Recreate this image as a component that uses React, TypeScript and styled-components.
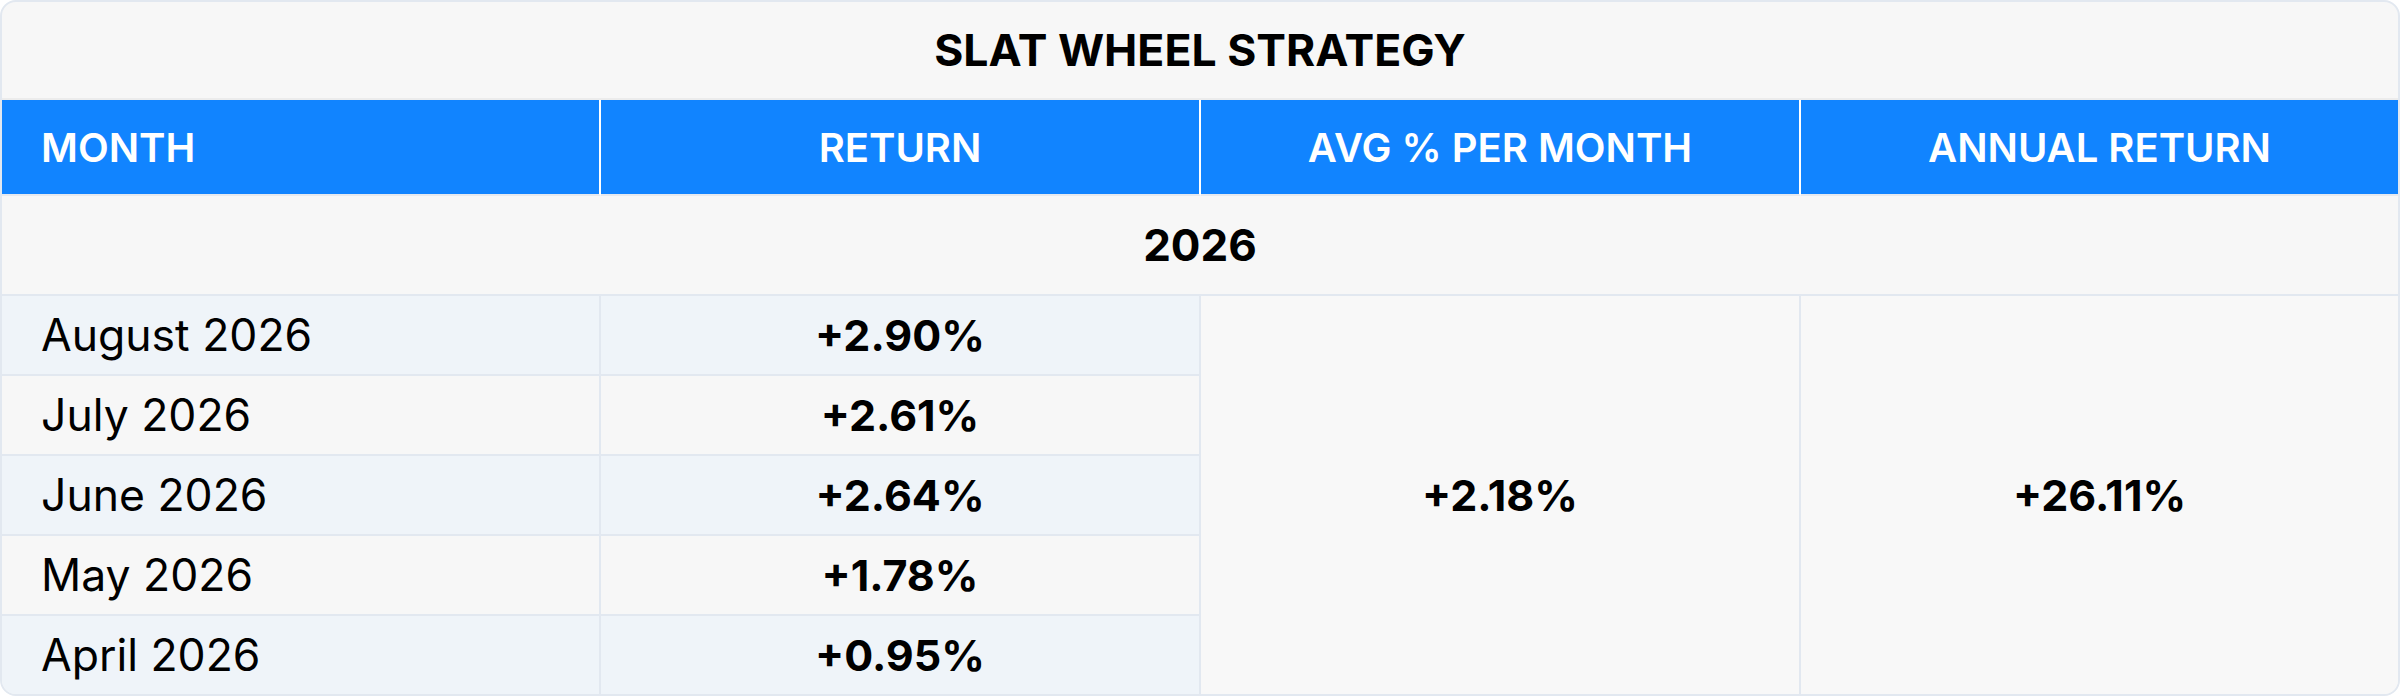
import React from 'react'
import styled, { createGlobalStyle } from 'styled-components'

const GlobalStyle = createGlobalStyle`
    html, body {
        margin: 0;
        padding: 0;
        background: #ffffff;
    }
    * {
        box-sizing: border-box;
    }
`

interface MonthRow {
    month: string;
    ret: string;
}

const rows: MonthRow[] = [
    { month: 'August 2026', ret: '+2.90%' },
    { month: 'July 2026', ret: '+2.61%' },
    { month: 'June 2026', ret: '+2.64%' },
    { month: 'May 2026', ret: '+1.78%' },
    { month: 'April 2026', ret: '+0.95%' },
]

const Wrap = styled.div`
    width: 2400px;
    height: 696px;
    border: 2px solid #e2e8f0;
    border-radius: 16px;
    overflow: hidden;
    background: #f7f7f7;
    font-family: Inter, "Noto Sans", sans-serif;
    color: #000000;
`
const Grid = styled.div`
    display: grid;
    grid-template-columns: 599px 600px 600px 597px;
    grid-template-rows: 98px 96px 100px 80px 80px 80px 80px 78px;
`
const Title = styled.div`
    grid-column: 1 / span 4;
    display: flex;
    align-items: center;
    justify-content: center;
    font-size: 44.5px;
    font-weight: 700;
    border-bottom: 2px solid #ececec;
`
const HeadCell = styled.div<{ $left?: boolean; $last?: boolean }>`
    display: flex;
    align-items: center;
    justify-content: ${p => (p.$left ? 'flex-start' : 'center')};
    padding-left: ${p => (p.$left ? '39px' : '0')};
    background: #1184ff;
    color: #ffffff;
    font-size: 40px;
    font-weight: 600;
    border-right: ${p => (p.$last ? 'none' : '2px solid #ffffff')};
    border-bottom: 2px solid #e6e9ef;
`
const YearCell = styled.div`
    grid-column: 1 / span 4;
    display: flex;
    align-items: center;
    justify-content: center;
    font-size: 44px;
    font-weight: 700;
    border-bottom: 2px solid #e2e8f0;
`
const BodyCell = styled.div<{ $shade: boolean; $lastRow: boolean; $left?: boolean }>`
    display: flex;
    align-items: center;
    justify-content: ${p => (p.$left ? 'flex-start' : 'center')};
    padding-left: ${p => (p.$left ? '39px' : '0')};
    background: ${p => (p.$shade ? '#eff4f9' : '#f7f7f7')};
    font-size: ${p => (p.$left ? '44.5px' : '43px')};
    font-weight: ${p => (p.$left ? 400 : 700)};
    border-right: 2px solid #e2e8f0;
    border-bottom: ${p => (p.$lastRow ? 'none' : '2px solid #e2e8f0')};
`
const SummaryCell = styled.div<{ $col: number; $last?: boolean }>`
    grid-column: ${p => p.$col};
    grid-row: 4 / span 5;
    display: flex;
    align-items: center;
    justify-content: center;
    background: #f8f8f8;
    font-size: 43px;
    font-weight: 700;
    border-right: ${p => (p.$last ? 'none' : '2px solid #e2e8f0')};
`

const App: React.FC = () => {
    return (
        <>
            <GlobalStyle />
            <Wrap>
                <Grid>
                    <Title>SLAT WHEEL STRATEGY</Title>
                    <HeadCell $left>MONTH</HeadCell>
                    <HeadCell>RETURN</HeadCell>
                    <HeadCell>AVG % PER MONTH</HeadCell>
                    <HeadCell $last>ANNUAL RETURN</HeadCell>
                    <YearCell>2026</YearCell>
                    {rows.map((r, i) => (
                        <React.Fragment key={r.month}>
                            <BodyCell
                                $left
                                $shade={i % 2 === 0}
                                $lastRow={i === rows.length - 1}
                                style={{ gridColumn: 1, gridRow: 4 + i }}
                            >
                                {r.month}
                            </BodyCell>
                            <BodyCell
                                $shade={i % 2 === 0}
                                $lastRow={i === rows.length - 1}
                                style={{ gridColumn: 2, gridRow: 4 + i }}
                            >
                                {r.ret}
                            </BodyCell>
                        </React.Fragment>
                    ))}
                    <SummaryCell $col={3}>+2.18%</SummaryCell>
                    <SummaryCell $col={4} $last>+26.11%</SummaryCell>
                </Grid>
            </Wrap>
        </>
    )
}

export default App
